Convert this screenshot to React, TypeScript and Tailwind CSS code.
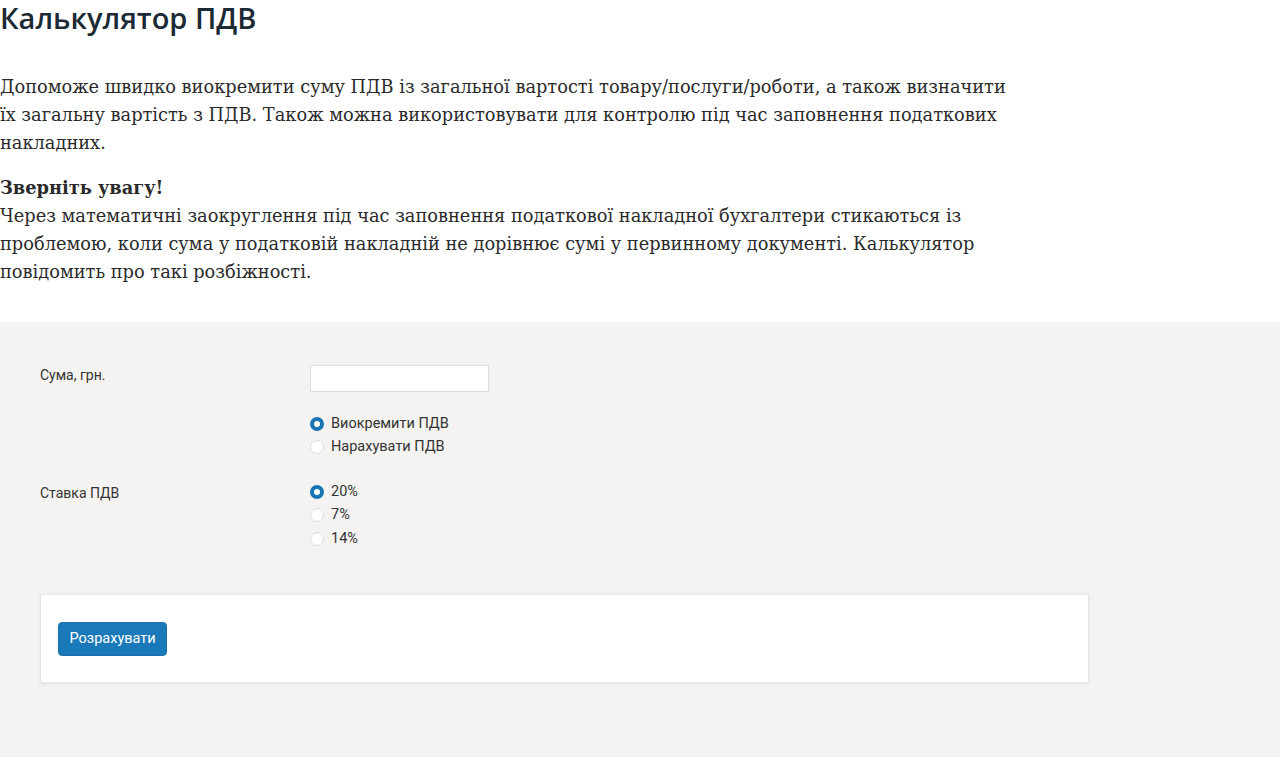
import React, { useState } from "react";

const serif = "font-['DejaVu_Serif',serif]";
const roboto = "font-['Roboto',sans-serif]";

type RadioProps = {
  name: string;
  label: string;
  checked: boolean;
  onChange: () => void;
};

const Radio: React.FC<RadioProps> = ({ name, label, checked, onChange }) => (
  <label className="flex h-[23.5px] cursor-pointer items-center gap-[7px]">
    <input
      type="radio"
      name={name}
      checked={checked}
      onChange={onChange}
      className="sr-only"
    />
    <span
      className={`box-border inline-block h-[14px] w-[14px] shrink-0 rounded-full bg-white ${
        checked ? "border-[4px] border-[#1a74b4]" : "border border-[#dcdcdc]"
      }`}
    />
    <span className="text-[14.5px] text-[#333]">{label}</span>
  </label>
);

export default function App() {
  const [mode, setMode] = useState("extract");
  const [rate, setRate] = useState("20");
  const [sum, setSum] = useState("");

  return (
    <div className="min-h-screen bg-white">
      <h1 className="font-['Open_Sans',sans-serif] text-[29px] font-semibold leading-[36px] text-[#1c2a35]">
        Калькулятор ПДВ
      </h1>

      <div className={`${serif} mt-[37px] w-[1025px] text-[17.8px] leading-[28px] text-[#2a2a2a]`}>
        <p>
          Допоможе швидко виокремити суму ПДВ із загальної вартості товару/послуги/роботи, а також визначити
          їх загальну вартість з ПДВ. Також можна використовувати для контролю під час заповнення податкових
          накладних.
        </p>
        <p className="mt-[17px]">
          <strong className="font-bold">Зверніть увагу!</strong>
          <br />
          Через математичні заокруглення під час заповнення податкової накладної бухгалтери стикаються із
          проблемою, коли сума у податковій накладній не дорівнює сумі у первинному документі. Калькулятор
          повідомить про такі розбіжності.
        </p>
      </div>

      <div className={`${roboto} mt-[36px] bg-[#f4f3f1] px-[40px] pb-[80px] pt-[43px]`}>
        <div className="flex">
          <div className="w-[270px] text-[14px] text-[#333]">Сума, грн.</div>
          <input
            type="text"
            value={sum}
            onChange={(e) => setSum(e.target.value)}
            className="h-[27px] w-[179px] border border-[#dddddd] bg-white px-2 text-[14px] outline-none"
          />
        </div>

        <div className="ml-[270px] mt-[20px] flex flex-col">
          <Radio name="mode" label="Виокремити ПДВ" checked={mode === "extract"} onChange={() => setMode("extract")} />
          <Radio name="mode" label="Нарахувати ПДВ" checked={mode === "add"} onChange={() => setMode("add")} />
        </div>

        <div className="mt-[21px] flex">
          <div className="w-[270px] pt-[3px] text-[14px] text-[#333]">Ставка ПДВ</div>
          <div className="flex flex-col">
            {["20", "7", "14"].map((r) => (
              <Radio key={r} name="rate" label={`${r}%`} checked={rate === r} onChange={() => setRate(r)} />
            ))}
          </div>
        </div>

        <div className="mt-[43px] w-[1049px] border border-[#e6e6e6] bg-white px-[17px] pb-[26px] pt-[27px] shadow-[0_1px_3px_rgba(0,0,0,0.08)]">
          <button className="h-[34px] rounded-[4px] border border-[#1b6fa6] bg-[#1a7ab9] px-[10.5px] text-[14.5px] text-white">
            Розрахувати
          </button>
        </div>
      </div>
    </div>
  );
}
